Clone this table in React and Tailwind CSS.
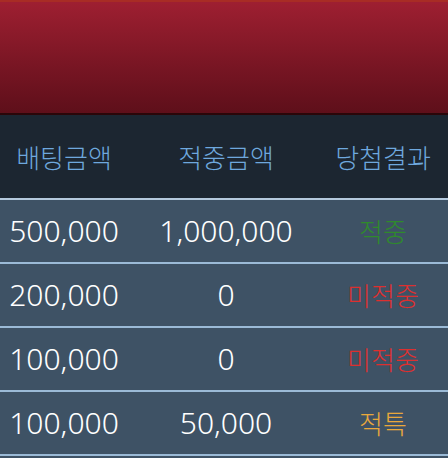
import React from 'react';

const ROWS = [
  { bet: '500,000', win: '1,000,000', result: '적중', color: 'text-[#2f8a2c]' },
  { bet: '200,000', win: '0', result: '미적중', color: 'text-[#dc3030]' },
  { bet: '100,000', win: '0', result: '미적중', color: 'text-[#dc3030]' },
  { bet: '100,000', win: '50,000', result: '적특', color: 'text-[#e9a83c]' },
];

const num = { fontFamily: '"Noto Sans", "Noto Sans CJK KR", sans-serif' };
const kor = { fontFamily: '"Noto Sans CJK KR", "Noto Sans", sans-serif' };

export default function App() {
  return (
    <div className="w-[448px] h-[458px] overflow-hidden bg-[#3e5265]">
      {/* top banner */}
      <div className="h-[115px] border-t-2 border-t-[#a82c25] border-b-2 border-b-[#2a0609] bg-gradient-to-b from-[#9e1f31] to-[#5e0f1a]" />

      {/* header row */}
      <div
        className="h-[85px] bg-[#1c2631] grid grid-cols-[128px_196px_1fr] items-center text-[26px] font-light text-[#6ea8de] border-b-2 border-[#b4c9dd]"
        style={kor}
      >
        <div className="text-center">배팅금액</div>
        <div className="text-center">적중금액</div>
        <div className="text-center pr-[6px]">당첨결과</div>
      </div>

      {/* rows */}
      {ROWS.map((r, i) => (
        <div
          key={i}
          className="h-[64px] grid grid-cols-[128px_196px_1fr] items-center border-b-2 border-[#9bbad6] text-white"
        >
          <div className="text-center text-[30px] leading-none font-light" style={num}>{r.bet}</div>
          <div className="text-center text-[30px] leading-none font-light" style={num}>{r.win}</div>
          <div className={`text-center pr-[6px] text-[26px] leading-none font-light ${r.color}`} style={kor}>{r.result}</div>
        </div>
      ))}
    </div>
  );
}
